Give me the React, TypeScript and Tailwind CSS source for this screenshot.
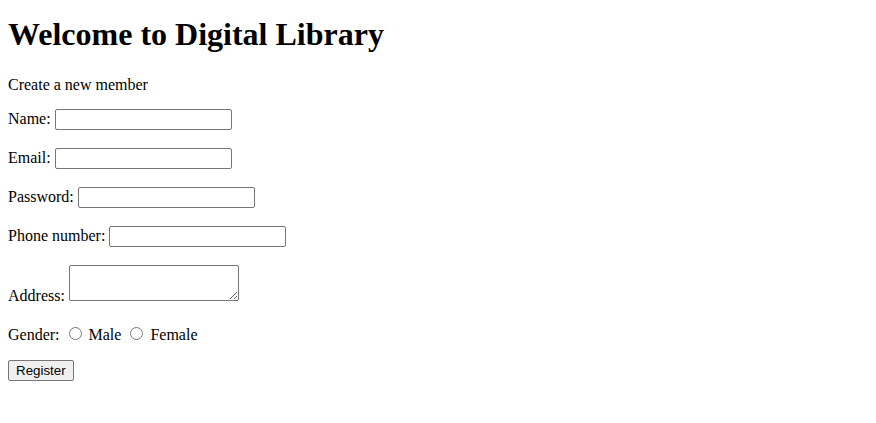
import React from "react";

const inputCls =
  "w-[177px] h-[21px] -mt-[1px] mb-[3px] border border-[#767676] rounded-[2px] px-[2px] py-[1px] bg-white align-baseline font-['Liberation_Sans',Arial,sans-serif] text-[13.333px]";

export default function App() {
  return (
    <div className="min-h-[423px] bg-white p-2 text-black font-['Liberation_Serif','Times_New_Roman',serif] text-base leading-[normal]">
      <h1 className="mt-2 mb-[23.44px] text-[32px] font-bold leading-[normal]">
        Welcome to Digital Library
      </h1>
      <p className="my-4">Create a new member</p>
      <form onSubmit={(e) => e.preventDefault()}>
        <p className="my-4">
          Name: <input type="text" className={inputCls} />
        </p>
        <p className="my-4">
          Email: <input type="email" className={inputCls} />
        </p>
        <p className="my-4">
          Password: <input type="password" className={inputCls} />
        </p>
        <p className="my-4">
          Phone number: <input type="tel" className={inputCls} />
        </p>
        <p className="mt-4 mb-[19px]">
          Address:{" "}
          <textarea className="w-[170px] h-[36px] -mt-[1px] mb-0 border border-[#767676] rounded-[2px] px-[2px] py-[2px] bg-white align-baseline resize font-['Liberation_Mono',monospace] text-[13.333px]" />
        </p>
        <p className="my-4">
          Gender:{" "}
          <input type="radio" name="gender" className="mt-[3px] mr-[3px] ml-[5px] mb-[2px] w-[13px] h-[13px] align-baseline" />
          {" "}Male{" "}
          <input type="radio" name="gender" className="mt-[3px] mr-[3px] ml-[5px] mb-[2px] w-[13px] h-[13px] align-baseline" />
          {" "}Female
        </p>
        <p className="my-4">
          <button
            type="submit"
            className="h-[21px] px-[7px] py-[1px] border border-[#767676] rounded-[2px] bg-[#efefef] text-black font-['Liberation_Sans',Arial,sans-serif] text-[13.333px] leading-[normal]"
          >
            Register
          </button>
        </p>
      </form>
    </div>
  );
}
